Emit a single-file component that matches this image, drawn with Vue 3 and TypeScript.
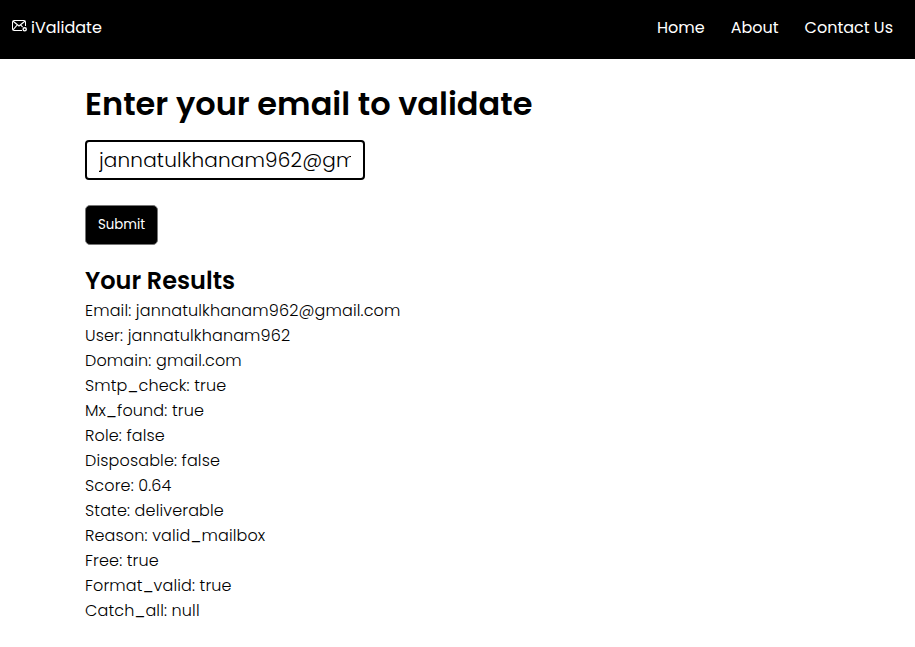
<script setup lang="ts">
import { ref } from 'vue'

interface Field {
  label: string
  value: string
}

const email = ref('jannatulkhanam962@gmail.com')

const links = ['Home', 'About', 'Contact Us']

const results: Field[] = [
  { label: 'Email', value: 'jannatulkhanam962@gmail.com' },
  { label: 'User', value: 'jannatulkhanam962' },
  { label: 'Domain', value: 'gmail.com' },
  { label: 'Smtp_check', value: 'true' },
  { label: 'Mx_found', value: 'true' },
  { label: 'Role', value: 'false' },
  { label: 'Disposable', value: 'false' },
  { label: 'Score', value: '0.64' },
  { label: 'State', value: 'deliverable' },
  { label: 'Reason', value: 'valid_mailbox' },
  { label: 'Free', value: 'true' },
  { label: 'Format_valid', value: 'true' },
  { label: 'Catch_all', value: 'null' },
]
</script>

<template>
  <div class="page">
    <nav class="navbar">
      <div class="brand">
        <svg class="logo" viewBox="0 0 16 14" fill="none" stroke="#fff">
          <path d="M11 11.500H2.500A1 1 0 0 1 1.500 10.500V2.500A1 1 0 0 1 2.500 1.500H13.500A1 1 0 0 1 14.500 2.500V7" />
          <path d="M1.800 2 8 7 14.200 2M1.800 11.200 6.200 6M9.800 6l1.800 2.200" stroke-width="1.150" />
          <circle cx="13.700" cy="10.300" r="1.600" stroke-width="1.400" />
        </svg>
        <span>iValidate</span>
      </div>
      <ul class="links">
        <li v-for="link in links" :key="link">{{ link }}</li>
      </ul>
    </nav>
    <main class="content">
      <h1>Enter your email to validate</h1>
      <form @submit.prevent>
        <input v-model="email" class="email" type="text" spellcheck="false" />
        <button class="submit" type="submit">Submit</button>
      </form>
      <h2>Your Results</h2>
      <div class="results">
        <div v-for="field in results" :key="field.label">{{ field.label }}: {{ field.value }}</div>
      </div>
    </main>
  </div>
</template>

<style>
body {
  margin: 0;
  background: #fff;
}
</style>

<style scoped>
.page,
.email,
.submit {
  font-family: Poppins, Inter, sans-serif;
}
.page {
  height: 647px;
  overflow: hidden;
  color: #000;
}
.navbar {
  display: flex;
  justify-content: space-between;
  box-sizing: border-box;
  height: 59px;
  padding: 16px 22px 0 11px;
  background: #000;
  color: #fff;
  font-size: 16px;
  line-height: 24px;
}
.brand {
  display: flex;
  gap: 4px;
}
.logo {
  width: 16px;
  height: 14px;
  margin-top: 3px;
}
.links {
  display: flex;
  gap: 26px;
  margin: 0;
  padding: 0;
  list-style: none;
}
.content {
  padding: 21px 85px 0;
}
h1 {
  margin: 0;
  font-size: 32px;
  line-height: 48px;
  font-weight: 600;
}
form {
  display: flex;
  flex-direction: column;
  align-items: flex-start;
  gap: 25px;
  margin-top: 12px;
}
.email {
  box-sizing: border-box;
  width: 280px;
  height: 40px;
  padding: 0 12px;
  border: 2px solid #000;
  border-radius: 4px;
  outline: none;
  background: #fff;
  color: #000;
  font-size: 20px;
  font-weight: 300;
  letter-spacing: 0.17px;
}
.submit {
  width: 73px;
  height: 40px;
  padding: 0 0 1px;
  border: 1px solid #767676;
  border-radius: 5px;
  background: #000;
  color: #fff;
  font-size: 13.333px;
}
h2 {
  margin: 18px 0 -1px;
  font-size: 24px;
  line-height: 36px;
  font-weight: 600;
}
.results {
  font-size: 16px;
  font-weight: 300;
  letter-spacing: 0.14px;
  line-height: 25px;
}
</style>
